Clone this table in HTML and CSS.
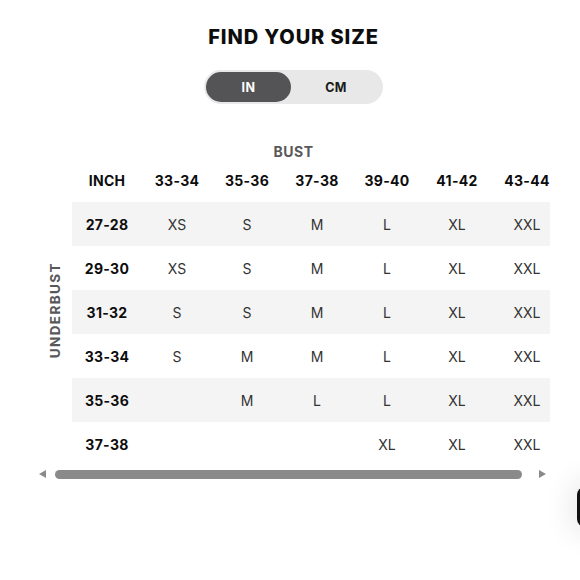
FILE: index.html
```html
<!DOCTYPE html>
<html lang="en">
<head>
<meta charset="utf-8">
<title>Find your size</title>
<link rel="stylesheet" href="styles.css">
</head>
<body>
<main class="page">
  <h1 class="title">FIND YOUR SIZE</h1>
  <div class="toggle">
    <button class="toggle-btn active">IN</button>
    <button class="toggle-btn">CM</button>
  </div>

  <section class="chart">
    <div class="scroller">
      <div class="bust">BUST</div>
      <table class="size-table">
        <tr class="head-row">
          <td class="side" rowspan="7"><span class="side-label">UNDERBUST</span></td>
          <th>INCH</th><th>33-34</th><th>35-36</th><th>37-38</th><th>39-40</th><th>41-42</th><th>43-44</th>
        </tr>
        <tr class="shade"><th>27-28</th><td>XS</td><td>S</td><td>M</td><td>L</td><td>XL</td><td>XXL</td></tr>
        <tr><th>29-30</th><td>XS</td><td>S</td><td>M</td><td>L</td><td>XL</td><td>XXL</td></tr>
        <tr class="shade"><th>31-32</th><td>S</td><td>S</td><td>M</td><td>L</td><td>XL</td><td>XXL</td></tr>
        <tr><th>33-34</th><td>S</td><td>M</td><td>M</td><td>L</td><td>XL</td><td>XXL</td></tr>
        <tr class="shade"><th>35-36</th><td></td><td>M</td><td>L</td><td>L</td><td>XL</td><td>XXL</td></tr>
        <tr><th>37-38</th><td></td><td></td><td></td><td>XL</td><td>XL</td><td>XXL</td></tr>
      </table>
    </div>
    <div class="scrollbar">
      <span class="arrow arrow-left"></span>
      <span class="thumb"></span>
      <span class="arrow arrow-right"></span>
    </div>
  </section>
</main>
<div class="chat-widget"></div>
</body>
</html>
```

FILE: styles.css
```css
html, body {
  margin: 0;
  padding: 0;
  background: #ffffff;
}

body {
  font-family: Inter, "Open Sans", "Liberation Sans", sans-serif;
  color: #111;
}

.page {
  width: 513px;
  margin-left: 37px;
  display: flex;
  flex-direction: column;
  align-items: center;
  padding-top: 25px;
}

.title {
  margin: 0;
  font-size: 20px;
  line-height: 24px;
  font-weight: 800;
  letter-spacing: 0.9px;
  color: #0d0d0d;
}

.toggle {
  margin-top: 21px;
  width: 179px;
  height: 34px;
  box-sizing: border-box;
  padding: 2px;
  border-radius: 17px;
  background: #e8e8e8;
  display: flex;
}

.toggle-btn {
  border: 0;
  padding: 0;
  margin: 0;
  font-family: inherit;
  font-size: 12.5px;
  font-weight: 700;
  letter-spacing: 0.4px;
  background: transparent;
  color: #1a1a1a;
  border-radius: 15px;
  flex: 1;
}

.toggle-btn.active {
  flex: 0 0 85px;
  background: #545456;
  color: #ffffff;
}

.chart {
  margin-top: 39px;
  width: 513px;
}

.scroller {
  width: 513px;
  overflow: hidden;
}

.bust {
  text-align: center;
  font-size: 14px;
  line-height: 18px;
  font-weight: 700;
  letter-spacing: 0.5px;
  color: #58585a;
}

.size-table {
  border-collapse: collapse;
  table-layout: fixed;
  width: 525px;
}

.size-table th,
.size-table td {
  width: 70px;
  height: 44px;
  padding: 0;
  text-align: center;
  vertical-align: middle;
  font-size: 14px;
}

.size-table th {
  font-weight: 700;
  color: #0d0d0d;
  letter-spacing: 0.3px;
}

.size-table td {
  font-weight: 400;
  color: #333;
}

.head-row th {
  height: 41px;
  padding-bottom: 3px;
  box-sizing: border-box;
}

.size-table td.side {
  width: 35px;
  background: #ffffff;
}

.side-label {
  display: inline-block;
  writing-mode: vertical-rl;
  transform: rotate(180deg);
  font-size: 13.5px;
  font-weight: 700;
  letter-spacing: 1.4px;
  color: #58585a;
  margin-bottom: 4px;
}

.shade th,
.shade td {
  background: #f4f4f4;
}

.scrollbar {
  height: 16px;
  display: flex;
  align-items: center;
}

.arrow {
  width: 0;
  height: 0;
  border-top: 4.5px solid transparent;
  border-bottom: 4.5px solid transparent;
}

.arrow-left {
  margin-left: 2px;
  border-right: 7px solid #8a8a8a;
}

.thumb {
  margin-left: 9px;
  width: 467px;
  height: 9px;
  border-radius: 5px;
  background: #8a8a8a;
}

.arrow-right {
  margin-left: 17px;
  border-left: 7px solid #8a8a8a;
}

.chat-widget {
  position: fixed;
  left: 577px;
  top: 487px;
  width: 60px;
  height: 40px;
  border-radius: 8px;
  background: #111;
  box-shadow: 0 0 28px 8px rgba(0, 0, 0, 0.08);
}
```
